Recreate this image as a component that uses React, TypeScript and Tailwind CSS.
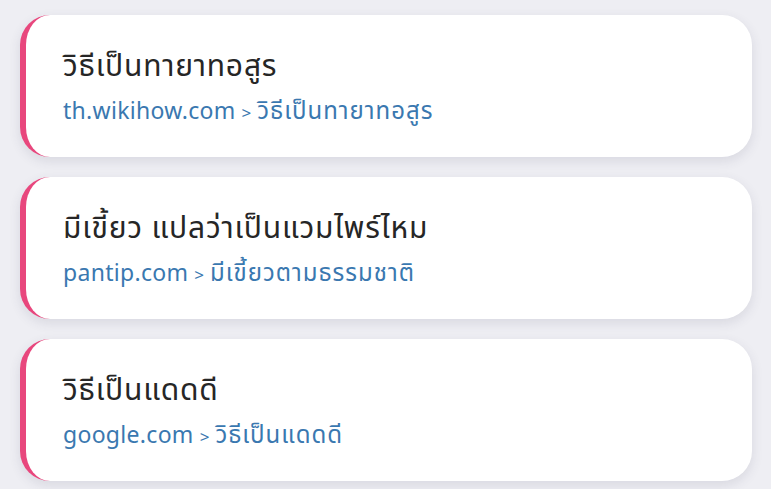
const results = [
  {
    title: "วิธีเป็นทายาทอสูร",
    site: "th.wikihow.com",
    crumb: "วิธีเป็นทายาทอสูร",
  },
  {
    title: "มีเขี้ยว แปลว่าเป็นแวมไพร์ไหม",
    site: "pantip.com",
    crumb: "มีเขี้ยวตามธรรมชาติ",
  },
  {
    title: "วิธีเป็นแดดดี",
    site: "google.com",
    crumb: "วิธีเป็นแดดดี",
  },
];

export default function App() {
  return (
    <div
      className="min-h-[489px] w-[771px] bg-[#eeeef3] px-[20px] pt-[15px]"
      style={{ fontFamily: '"Noto Sans", "Noto Sans Thai", sans-serif' }}
    >
      <div className="flex w-[732px] flex-col gap-[20px]">
        {results.map((r) => (
          <div
            key={r.site}
            className="flex h-[142px] flex-col justify-center rounded-[30px] border-l-[6px] border-[#e8477d] bg-white pl-[37px] pt-[2px] shadow-[0_4px_12px_rgba(60,60,90,0.12)]"
          >
            <div className="text-[30px] leading-[36px] tracking-[0.8px] text-[#262626]">
              {r.title}
            </div>
            <div className="mt-[12px] flex items-baseline text-[23px] leading-[30px] text-[#3a78b0]">
              <span className="tracking-[0.3px]">{r.site}</span>
              <span className="mx-[6px] text-[17px]">&gt;</span>
              <span className="text-[24px] tracking-[1px]">{r.crumb}</span>
            </div>
          </div>
        ))}
      </div>
    </div>
  );
}
